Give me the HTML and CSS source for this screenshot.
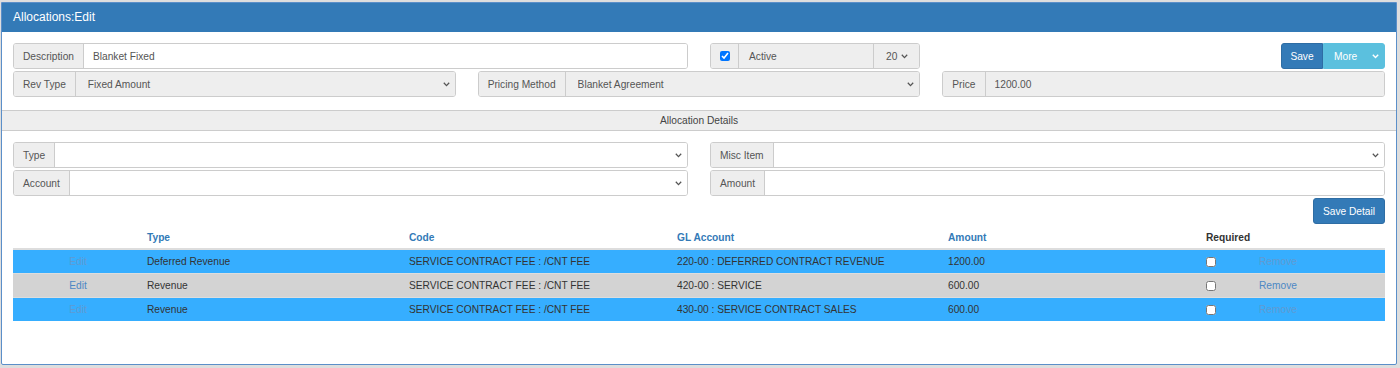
FILE: index.html
```html
<!DOCTYPE html>
<html lang="en">
<head>
    <meta charset="UTF-8">
    <title>Allocations:Edit</title>
    <link rel="stylesheet" href="styles.css">
</head>
<body>

<div class="page">
<div class="panel">
    <div class="panel-heading">Allocations:Edit</div>

    <!-- Основная форма -->
    <div class="panel-body top-body">
        <div class="form-row two">
            <div class="input-group">
                <span class="addon">Description</span>
                <input class="field" type="text" value="Blanket Fixed">
            </div>
            <div class="toolbar">
                <div class="input-group active-group">
                    <span class="addon check-addon"><input type="checkbox" checked></span>
                    <span class="addon active-label">Active</span>
                    <span class="addon count-addon">20
                        <svg class="chev" width="7" height="5" viewBox="0 0 7 5"><path d="M0.8 0.8 L3.5 3.6 L6.2 0.8" fill="none" stroke="#555" stroke-width="1.3"/></svg>
                    </span>
                </div>
                <div class="btn-group">
                    <button class="btn btn-primary">Save</button>
                    <button class="btn btn-info btn-more">More
                        <svg width="7" height="5" viewBox="0 0 7 5"><path d="M0.8 0.8 L3.5 3.6 L6.2 0.8" fill="none" stroke="#fff" stroke-width="1.4"/></svg>
                    </button>
                </div>
            </div>
        </div>

        <div class="form-row three">
            <div class="input-group">
                <span class="addon">Rev Type</span>
                <div class="select-wrap readonly">
                    <select><option>Fixed Amount</option></select>
                    <svg class="chev" width="7" height="5" viewBox="0 0 7 5"><path d="M0.8 0.8 L3.5 3.6 L6.2 0.8" fill="none" stroke="#555" stroke-width="1.3"/></svg>
                </div>
            </div>
            <div class="input-group">
                <span class="addon">Pricing Method</span>
                <div class="select-wrap readonly">
                    <select><option>Blanket Agreement</option></select>
                    <svg class="chev" width="7" height="5" viewBox="0 0 7 5"><path d="M0.8 0.8 L3.5 3.6 L6.2 0.8" fill="none" stroke="#555" stroke-width="1.3"/></svg>
                </div>
            </div>
            <div class="input-group">
                <span class="addon">Price</span>
                <input class="field readonly" type="text" value="1200.00" readonly>
            </div>
        </div>
    </div>

    <div class="section-bar">Allocation Details</div>

    <!-- Детали распределения -->
    <div class="panel-body detail-body">
        <div class="form-row two">
            <div class="input-group">
                <span class="addon">Type</span>
                <div class="select-wrap">
                    <select><option></option></select>
                    <svg class="chev" width="7" height="5" viewBox="0 0 7 5"><path d="M0.8 0.8 L3.5 3.6 L6.2 0.8" fill="none" stroke="#555" stroke-width="1.3"/></svg>
                </div>
            </div>
            <div class="input-group">
                <span class="addon">Misc Item</span>
                <div class="select-wrap">
                    <select><option></option></select>
                    <svg class="chev" width="7" height="5" viewBox="0 0 7 5"><path d="M0.8 0.8 L3.5 3.6 L6.2 0.8" fill="none" stroke="#555" stroke-width="1.3"/></svg>
                </div>
            </div>
        </div>
        <div class="form-row two">
            <div class="input-group">
                <span class="addon">Account</span>
                <div class="select-wrap">
                    <select><option></option></select>
                    <svg class="chev" width="7" height="5" viewBox="0 0 7 5"><path d="M0.8 0.8 L3.5 3.6 L6.2 0.8" fill="none" stroke="#555" stroke-width="1.3"/></svg>
                </div>
            </div>
            <div class="input-group">
                <span class="addon">Amount</span>
                <input class="field" type="text" value="">
            </div>
        </div>

        <div class="actions">
            <button class="btn btn-primary btn-detail">Save Detail</button>
        </div>

        <table class="details">
            <colgroup>
                <col style="width:130px">
                <col style="width:262px">
                <col style="width:268px">
                <col style="width:271px">
                <col style="width:258px">
                <col style="width:53px">
                <col style="width:130px">
            </colgroup>
            <thead>
                <tr>
                    <th></th>
                    <th><a href="#">Type</a></th>
                    <th><a href="#">Code</a></th>
                    <th><a href="#">GL Account</a></th>
                    <th><a href="#">Amount</a></th>
                    <th>Required</th>
                    <th></th>
                </tr>
            </thead>
            <tbody>
                <tr class="row-blue">
                    <td class="edit"><a href="#">Edit</a></td>
                    <td>Deferred Revenue</td>
                    <td>SERVICE CONTRACT FEE : /CNT FEE</td>
                    <td>220-00 : DEFERRED CONTRACT REVENUE</td>
                    <td>1200.00</td>
                    <td><input type="checkbox"></td>
                    <td><a href="#">Remove</a></td>
                </tr>
                <tr class="row-gray">
                    <td class="edit"><a href="#">Edit</a></td>
                    <td>Revenue</td>
                    <td>SERVICE CONTRACT FEE : /CNT FEE</td>
                    <td>420-00 : SERVICE</td>
                    <td>600.00</td>
                    <td><input type="checkbox"></td>
                    <td><a href="#">Remove</a></td>
                </tr>
                <tr class="row-blue">
                    <td class="edit"><a href="#">Edit</a></td>
                    <td>Revenue</td>
                    <td>SERVICE CONTRACT FEE : /CNT FEE</td>
                    <td>430-00 : SERVICE CONTRACT SALES</td>
                    <td>600.00</td>
                    <td><input type="checkbox"></td>
                    <td><a href="#">Remove</a></td>
                </tr>
            </tbody>
        </table>
    </div>
</div>
</div>

</body>
</html>
```

FILE: styles.css
```css
body {
    font-family: "Liberation Sans", Arial, sans-serif;
    font-size: 10.2px;
    color: #333;
    background-color: #dedede;
    margin: 0;
    padding: 0;
}
.page {
    padding: 2px 3px 0 1px;
}
.panel {
    background-color: #fff;
    border: 1px solid #5b8fc9;
    border-radius: 0 0 2px 2px;
}
.panel-heading {
    background-color: #337ab7;
    color: #fff;
    font-size: 12px;
    height: 28px;
    padding: 0 11px 1px;
    display: flex;
    align-items: center;
}
.panel-body {
    padding: 11px 11px 13px;
}
.detail-body {
    padding: 11px 11px 43px;
}

/* Строки формы */
.form-row {
    display: grid;
    column-gap: 22px;
    margin-bottom: 2px;
}
.top-body .form-row:last-child {
    margin-bottom: 0;
}
.form-row.two {
    grid-template-columns: 1fr 1fr;
}
.form-row.three {
    grid-template-columns: 1fr 1fr 1fr;
}
.input-group {
    display: flex;
    height: 26px;
    box-sizing: border-box;
    border: 1px solid #ccc;
    border-radius: 3px;
    overflow: hidden;
    background-color: #fff;
}
.addon {
    display: flex;
    align-items: center;
    padding: 0 9px;
    background-color: #eee;
    border-right: 1px solid #ccc;
    color: #555;
    white-space: nowrap;
}
.field {
    flex: 1;
    min-width: 0;
    border: none;
    outline: none;
    padding: 0 9px;
    font-family: inherit;
    font-size: 10.2px;
    color: #555;
    background-color: #fff;
}
.field.readonly {
    background-color: #eee;
}
.select-wrap {
    flex: 1;
    position: relative;
    display: flex;
    background-color: #fff;
}
.select-wrap.readonly {
    background-color: #eee;
}
.select-wrap select {
    flex: 1;
    appearance: none;
    border: none;
    outline: none;
    background: transparent;
    padding: 0 12px;
    font-family: inherit;
    font-size: 10.2px;
    color: #555;
}
.select-wrap .chev {
    position: absolute;
    right: 5px;
    top: 10px;
}

/* Активность и кнопки */
.toolbar {
    display: flex;
    justify-content: space-between;
    align-items: flex-start;
}
.active-group {
    width: 210px;
}
.check-addon {
    width: 28px;
    box-sizing: border-box;
    justify-content: center;
    padding: 0;
}
.check-addon input {
    width: 10px;
    height: 10px;
    margin: 0;
}
.active-label {
    width: 135px;
    box-sizing: border-box;
    padding-left: 10px;
}
.count-addon {
    flex: 1;
    border-right: none;
    padding: 0 0 0 12px;
    gap: 4px;
}
.btn-group {
    display: flex;
    height: 26px;
}
.btn {
    border: 1px solid transparent;
    font-family: inherit;
    font-size: 10.2px;
    color: #fff;
    cursor: pointer;
    padding: 0 8px;
}
.btn-primary {
    background-color: #337ab7;
    border-color: #2e6da4;
}
.btn-group .btn-primary {
    width: 42px;
    border-radius: 3px 0 0 3px;
}
.btn-info {
    background-color: #5bc0de;
    border-color: #5bc0de;
}
.btn-more {
    width: 62px;
    border-radius: 0 3px 3px 0;
    display: flex;
    align-items: center;
    justify-content: space-between;
    padding: 0 5px 0 10px;
}

/* Полоса раздела */
.section-bar {
    height: 19px;
    line-height: 19px;
    text-align: center;
    background-color: #eee;
    border-top: 1px solid #ccc;
    border-bottom: 1px solid #ccc;
    color: #444;
}

.actions {
    display: flex;
    justify-content: flex-end;
}
.btn-detail {
    width: 72px;
    height: 26px;
    border-radius: 3px;
    padding: 0;
}

/* Таблица деталей */
.details {
    width: 1372px;
    table-layout: fixed;
    border-collapse: collapse;
    margin-top: 3px;
}
.details th {
    height: 21px;
    padding: 0 4px;
    text-align: left;
    font-weight: bold;
    color: #333;
    border-bottom: 2px solid #ddd;
}
.details th a {
    color: #337ab7;
    text-decoration: none;
}
.details td {
    height: 23px;
    padding: 0 4px;
    border-top: 1px solid #ddd;
    color: #333;
    white-space: nowrap;
}
.details td.edit {
    text-align: center;
}
.details td a {
    text-decoration: none;
}
.details td input {
    width: 10px;
    height: 10px;
    margin: 0;
    vertical-align: middle;
}
.row-blue td {
    background-color: #36aeff;
}
.row-blue td a {
    color: #5f9bd2;
}
.row-gray td {
    background-color: #d3d3d3;
}
.row-gray td a {
    color: #4d88c4;
}
```
